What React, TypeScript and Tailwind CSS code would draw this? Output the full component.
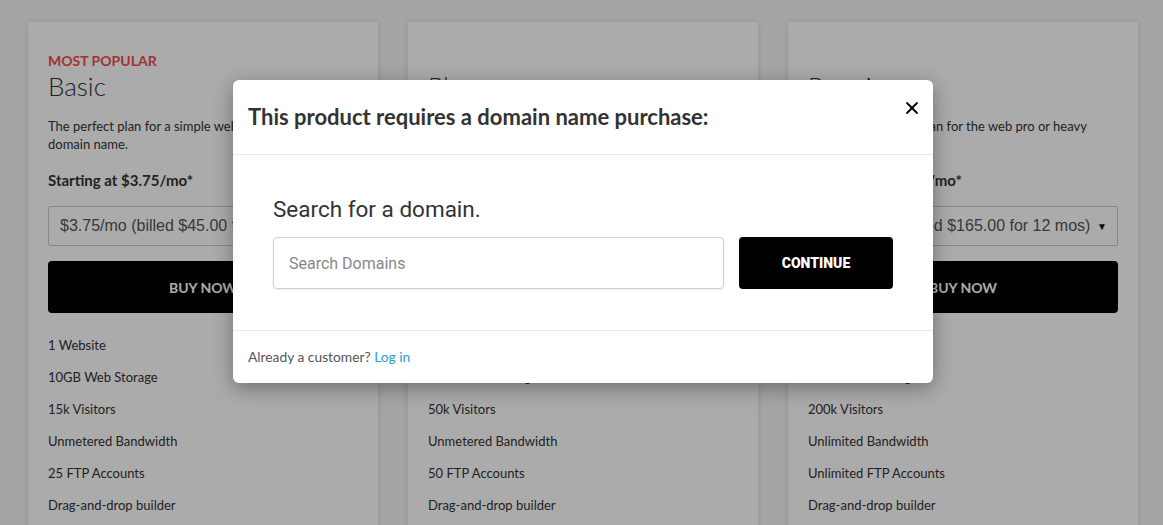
import { X } from "lucide-react";

type Plan = {
  label?: string;
  name: string;
  desc: string;
  starting: string;
  option: string;
  features: string[];
};

const plans: Plan[] = [
  {
    label: "MOST POPULAR",
    name: "Basic",
    desc: "The perfect plan for a simple website with a domain name.",
    starting: "Starting at $3.75/mo*",
    option: "$3.75/mo (billed $45.00 for 12 mos)",
    features: [
      "1 Website",
      "10GB Web Storage",
      "15k Visitors",
      "Unmetered Bandwidth",
      "25 FTP Accounts",
      "Drag-and-drop builder",
    ],
  },
  {
    name: "Plus",
    desc: "More room to grow for a busy site or a small online business.",
    starting: "Starting at $5.75/mo*",
    option: "$5.75/mo (billed $69.00 for 12 mos)",
    features: [
      "5 Websites",
      "25GB Web Storage",
      "50k Visitors",
      "Unmetered Bandwidth",
      "50 FTP Accounts",
      "Drag-and-drop builder",
    ],
  },
  {
    name: "Premium",
    desc: "The most powerful plan for the web pro or heavy traffic site.",
    starting: "Starting at $13.75/mo*",
    option: "$13.75/mo (billed $165.00 for 12 mos)",
    features: [
      "Unlimited Websites",
      "50GB Web Storage",
      "200k Visitors",
      "Unlimited Bandwidth",
      "Unlimited FTP Accounts",
      "Drag-and-drop builder",
    ],
  },
];

const lato = "font-['Lato','Liberation_Sans',sans-serif]";
const roboto = "font-['Roboto','Liberation_Sans',sans-serif]";

function PlanCard({ plan }: { plan: Plan }) {
  return (
    <div className="w-[350px] shrink-0 bg-white px-5 pt-[29px] pb-10 shadow-[0_0_8px_rgba(0,0,0,0.12)]">
      <div className="h-5 text-[14px] leading-5 font-bold text-[#f04c4c]">
        {plan.label}
      </div>
      <h2 className="-mt-px text-[26px] leading-8 font-light text-[#333]">
        {plan.name}
      </h2>
      <p className="mt-[15px] max-w-[290px] text-[13px] leading-[18px] text-[#333]">
        {plan.desc}
      </p>
      <p className="mt-4 text-[15px] leading-[22px] font-bold text-[#333]">
        {plan.starting}
      </p>
      <div className="mt-[15px] flex h-10 items-center justify-between rounded-[2px] border border-[#c8c8c8] pr-[10px] pl-[11px] font-['Liberation_Sans',Arial,sans-serif] text-[16px] text-[#555]">
        <span className="whitespace-nowrap">{plan.option}</span>
        <span className="text-[10px] text-[#111]">▼</span>
      </div>
      <button className="mt-[15px] flex h-[52px] w-full items-center justify-center rounded-[4px] bg-black text-[14px] font-bold text-white">
        BUY NOW
      </button>
      <ul className="mt-4">
        {plan.features.map((f) => (
          <li key={f} className="text-[13px] leading-8 text-[#333]">
            {f}
          </li>
        ))}
      </ul>
    </div>
  );
}

export default function App() {
  return (
    <div className={`relative h-[525px] w-full overflow-hidden bg-[#f7f7f7] ${lato}`}>
      <div className="flex gap-[30px] pt-[22px] pl-[28px]">
        {plans.map((p) => (
          <PlanCard key={p.name} plan={p} />
        ))}
      </div>

      {/* modal backdrop */}
      <div className="absolute inset-0 bg-black/[0.33]" />

      <div className="absolute top-[80px] left-[233px] w-[700px] overflow-hidden rounded-[6px] bg-white shadow-[0_5px_20px_rgba(0,0,0,0.35)]">
        <div className="relative flex h-[75px] items-center border-b border-[#e8e8e8] px-[15px]">
          <h3 className="-mt-px text-[22px] font-bold text-[#333]">
            This product requires a domain name purchase:
          </h3>
          <button className="absolute top-[18px] right-[11px] text-black">
            <X className="h-[20px] w-[20px]" strokeWidth={2.2} />
          </button>
        </div>
        <div className={`px-10 pt-10 pb-[41px] ${roboto}`}>
          <p className="text-[22.5px] leading-7 text-[#333]">
            Search for a domain.
          </p>
          <div className="mt-[14px] flex gap-[15px]">
            <input
              placeholder="Search Domains"
              className="h-[52px] flex-1 rounded-[4px] border border-[#cfcfcf] px-[15px] text-[16px] text-[#333] shadow-[0_1px_2px_rgba(0,0,0,0.08)] outline-none placeholder:text-[#888]"
            />
            <button className="h-[52px] w-[154px] rounded-[4px] bg-black text-[14px] font-black text-white">
              CONTINUE
            </button>
          </div>
        </div>
        <div className="flex h-[53px] items-center border-t border-[#e8e8e8] px-[15px] text-[13.8px] text-[#555]">
          Already a customer?&nbsp;
          <a className="text-[#2a9fd6]">Log in</a>
        </div>
      </div>
    </div>
  );
}
